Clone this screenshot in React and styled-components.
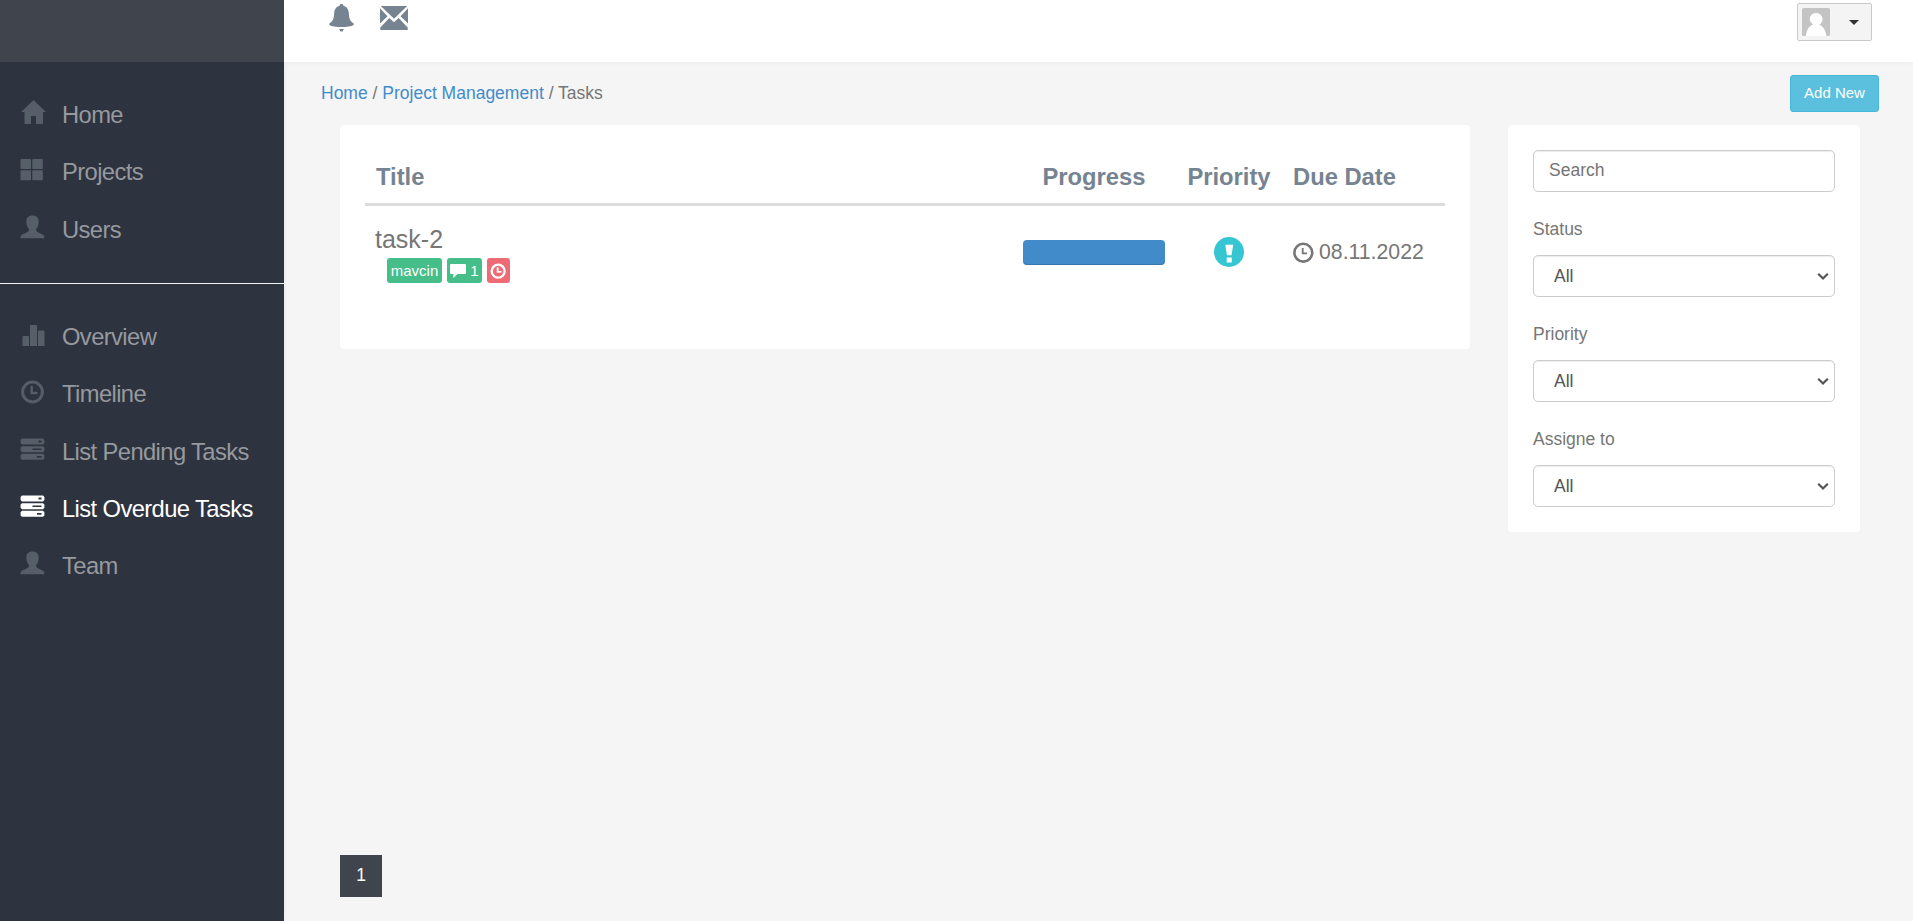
import React from 'react';
import styled, { createGlobalStyle } from 'styled-components';

const GlobalStyle = createGlobalStyle`
  * { box-sizing: border-box; }
  body {
    margin: 0;
    background: #f5f5f5;
    color: #767676;
    font-family: "Liberation Sans", Arial, sans-serif;
    font-size: 17.5px;
    line-height: 25px;
  }
`;

const Page = styled.div`
  display: flex;
  height: 921px;
  overflow: hidden;
`;

const Sidebar = styled.aside`
  flex: 0 0 284px;
  display: flex;
  flex-direction: column;
  background: #2d333f;
  box-shadow: 0 0 5px rgba(0, 0, 0, 0.06);
`;

const Brand = styled.div`
  height: 62px;
  background: #40444c;
`;

const NavGroup = styled.nav`
  padding: 24px 0 25.25px;
  & + & { border-top: 1px solid #f4f4f4; }
`;

const NavItem = styled.a`
  display: flex;
  align-items: center;
  gap: 16px;
  height: 57.25px;
  padding-left: 20px;
  font-size: 23.75px;
  letter-spacing: -0.6px;
  white-space: nowrap;
  color: ${(p) => (p.$active ? '#fff' : '#96999e')};
  svg {
    flex: none;
    margin-bottom: 5px;
    color: ${(p) => (p.$active ? '#fff' : '#565e67')};
  }
`;

const Main = styled.main`
  flex: 1;
  display: flex;
  flex-direction: column;
  min-width: 0;
`;

const TopBar = styled.header`
  display: flex;
  justify-content: space-between;
  align-items: flex-start;
  height: 62px;
  padding: 3px 41px 0 44px;
  background: #fff;
  box-shadow: 0 1px 5px rgba(0, 0, 0, 0.04);
`;

const TopIcons = styled.div`
  display: flex;
  gap: 24px;
  color: #768391;
`;

const UserButton = styled.button`
  display: flex;
  align-items: center;
  justify-content: space-between;
  width: 75px;
  height: 38px;
  padding: 0 12px 0 4px;
  border: 1px solid #c9c9c9;
  border-radius: 2px;
  background: #f4f4f4;
  color: #333;
`;

const PageHead = styled.div`
  display: flex;
  justify-content: space-between;
  align-items: flex-start;
  padding: 13px 34px 0 37px;
  height: 63px;
`;

const Breadcrumb = styled.div`
  padding-top: 6px;
  white-space: nowrap;
`;

const Link = styled.a`
  color: #428bca;
`;

const AddButton = styled.button`
  width: 89px;
  height: 37px;
  padding: 0 0 3px;
  border: 1px solid #46b8da;
  border-radius: 3px;
  background: #5bc0de;
  color: #fff;
  font: 15px "Liberation Sans", Arial, sans-serif;
`;

const Content = styled.div`
  display: flex;
  align-items: flex-start;
  gap: 38px;
  padding: 0 53px 0 56px;
`;

const Panel = styled.section`
  background: #fff;
  border-radius: 4px;
  padding: 25px;
`;

const TaskPanel = styled(Panel)`
  flex: 1;
  height: 224px;
`;

const FilterPanel = styled(Panel)`
  flex: 0 0 352px;
  height: 407px;
`;

const Row = styled.div`
  display: grid;
  grid-template-columns: 1fr 162px 108px 162px;
`;

const HeadRow = styled(Row)`
  height: 56px;
  padding-top: 14px;
  border-bottom: 3px solid #dcdcdc;
  color: #768391;
  font-size: 23.75px;
  font-weight: bold;
`;

const TaskRow = styled(Row)`
  height: 92px;
`;

const Cell = styled.div`
  padding: 0 10px;
  text-align: ${(p) => (p.$center ? 'center' : 'left')};
  white-space: nowrap;
`;

const TitleHead = styled(Cell)`
  padding-left: 11px;
`;

const MiddleCell = styled(Cell)`
  display: flex;
  align-items: center;
  justify-content: ${(p) => (p.$center ? 'center' : 'flex-start')};
  gap: 5px;
`;

const TaskTitle = styled.div`
  padding-top: 19px;
  font-size: 25px;
  line-height: 28px;
`;

const Tags = styled.div`
  display: flex;
  gap: 5px;
  margin: 5px 0 0 12px;
`;

const Tag = styled.span`
  display: flex;
  align-items: center;
  justify-content: center;
  gap: 4px;
  width: ${(p) => p.$width}px;
  height: 25px;
  border-radius: 3px;
  background: ${(p) => (p.$late ? '#ee6b75' : '#46be8a')};
  color: #fff;
  font-size: 15px;
  line-height: 25px;
`;

const Bar = styled.div`
  width: 142px;
  height: 25px;
  border-radius: 4px;
  background: #428bca;
  box-shadow: inset 0 -1px 0 rgba(0, 0, 0, 0.15);
`;

const DueDate = styled.span`
  font-size: 21.25px;
`;

const Control = styled.input`
  display: block;
  width: 302px;
  height: 42px;
  padding: 0 15px 1px;
  border: 1px solid #ccc;
  border-radius: 5px;
  background: #fff;
  box-shadow: inset 0 1px 1px rgba(0, 0, 0, 0.075);
  font: 17.5px "Liberation Sans", Arial, sans-serif;
  color: #555;
  appearance: none;
  &::placeholder { color: #757575; opacity: 1; }
`;

const SelectControl = styled(Control)`
  padding: 0 20px 1px;
`;

const Label = styled.label`
  display: block;
  margin: 25px 0 13px;
`;

const SelectBox = styled.div`
  position: relative;
  svg {
    position: absolute;
    right: 6px;
    top: 17px;
    pointer-events: none;
  }
`;

const PageNumber = styled.a`
  width: 42px;
  height: 42px;
  margin: auto 0 24px 56px;
  background: #40444c;
  color: #fff;
  text-align: center;
  line-height: 40px;
`;

const Icon = ({ size = 26, children }) => (
  <svg width={size} height={size} viewBox="0 0 26 26" fill="currentColor">{children}</svg>
);

const HomeIcon = () => (
  <Icon>
    <path d="M13.5 1 L26 13 H23 V25 H16 V17 H11 V25 H4.500 V13 H1 Z" />
  </Icon>
);

const GridIcon = () => (
  <Icon>
    <rect x="0.500" y="3" width="10.500" height="10" rx="0.800" />
    <rect x="12.300" y="3" width="10.500" height="10" rx="0.800" />
    <rect x="0.500" y="14.200" width="10.500" height="10" rx="0.800" />
    <rect x="12.300" y="14.200" width="10.500" height="10" rx="0.800" />
  </Icon>
);

const UserIcon = () => (
  <Icon>
    <path d="M12.5 1.500 C16.500 1.500 18.700 3.700 18.700 7.500 C18.700 11 17.800 13 16.200 14.800 C15.800 16.800 16.500 17.500 18 18.200 L23 20.800 C24 21.400 24.400 22.300 24.400 24.300 H0.500 C0.500 22.300 1 21.400 2 20.800 L7 18.200 C8.500 17.500 9.200 16.800 8.800 14.800 C7.200 13 6.300 11 6.300 7.500 C6.300 3.700 8.500 1.500 12.500 1.500 Z" />
  </Icon>
);

const StatsIcon = () => (
  <Icon>
    <path d="M2.500 25 V16 Q2.500 15 3.500 15 H8 Q9 15 9 16 V25 Z M10 25 V5 Q10 4 11 4 H16 Q17 4 17 5 V25 Z M18 25 V10.500 Q18 9.500 19 9.500 H23.500 Q24.500 9.500 24.500 10.500 V25 Z" />
  </Icon>
);

const ClockIcon = ({ size, heavy }) => (
  <Icon size={size}>
    <circle cx="12.500" cy="14" r="9.900" fill="none" stroke="currentColor" strokeWidth={heavy ? 3.6 : 3} />
    <path d="M11.700 9 V15 H16.500" fill="none" stroke="currentColor" strokeWidth={heavy ? 2.8 : 2.4} strokeLinecap="round" />
  </Icon>
);

const DateClockIcon = () => (
  <svg width="21" height="21" viewBox="0 0 21 21" fill="none" stroke="currentColor">
    <circle cx="10.300" cy="10.700" r="8.900" strokeWidth="2.600" />
    <path d="M9.700 6 V11.300 H14" strokeWidth="1.800" />
  </svg>
);

const ListIcon = () => (
  <Icon>
    <path fillRule="evenodd" d="M2 2.500 H23 L24.400 3.900 V7.100 L23 8.500 H2 L0.600 7.100 V3.900 Z M18.500 4.500 V6.500 H21.500 V4.500 Z" />
    <path fillRule="evenodd" d="M2 10.200 H23 L24.400 11.600 V14.800 L23 16.200 H2 L0.600 14.800 V11.600 Z M12.500 12.400 V14.100 H21.500 V12.400 Z" />
    <path fillRule="evenodd" d="M2 17.800 H23 L24.400 19.200 V22.400 L23 23.800 H2 L0.600 22.400 V19.200 Z M17 20 V21.700 H21.500 V20 Z" />
  </Icon>
);

const BellIcon = () => (
  <svg width="28" height="30" viewBox="0 0 28 30" fill="currentColor">
    <path d="M13.500 1 C14.800 1 15.400 1.600 15.400 2.700 C19 3.600 20.500 6.500 20.800 10 C21.100 15.500 21.800 18 25.500 20.300 Q26 21 25.500 22 C21.500 24.700 5.500 24.700 1.500 22 Q1 21 1.500 20.300 C5.200 18 5.900 15.500 6.200 10 C6.500 6.500 8 3.600 11.600 2.700 C11.600 1.600 12.200 1 13.500 1 Z" />
    <path d="M11 26 H16 L14.500 28.600 H12.500 Z" />
  </svg>
);

const MailIcon = () => (
  <svg width="28" height="30" viewBox="0 0 28 30" fill="currentColor">
    <path d="M0.800 3 H27.200 L14 15.800 Z M0 5.300 L7.500 13.200 L0 20.500 Z M28 5.300 L20.500 13.200 L28 20.500 Z M9.300 15 L14 19.300 L18.700 15 L27.700 24.500 V27 H0.300 V24.500 Z" />
  </svg>
);

const Avatar = () => (
  <svg width="28" height="28" viewBox="0 0 28 28">
    <rect width="28" height="28" rx="1.500" fill="#c4c4c4" />
    <path d="M4 28 C4.500 22 7 18 11 16.500 C8.800 14.800 7.800 13 7.800 11 C7.800 7.500 10.600 5 14 5 C17.400 5 20.500 7.500 20.500 11 C20.500 13.500 19.300 15.500 17.300 16.700 C21 18 23.800 22 24.500 28 Z" fill="#fff" />
  </svg>
);

const Caret = () => (
  <svg width="10" height="5" viewBox="0 0 10 5" fill="currentColor">
    <path d="M0 0 H10 L5 5 Z" />
  </svg>
);

const Chevron = () => (
  <svg width="12" height="9" viewBox="0 0 12 9" fill="none" stroke="#555" strokeWidth="2.200">
    <path d="M1.200 1.700 L6 6.500 L10.800 1.700" />
  </svg>
);

const CommentIcon = () => (
  <svg width="16" height="15" viewBox="0 0 16 15" fill="currentColor">
    <path d="M1 1 H15 Q16 1 16 2 V10 Q16 11 15 11 H7.500 L3.300 15 V11 H1 Q0 11 0 10 V2 Q0 1 1 1 Z" />
  </svg>
);

const PriorityIcon = () => (
  <svg width="30" height="30" viewBox="0 0 30 30">
    <circle cx="15" cy="15" r="15" fill="#36c6d3" />
    <path d="M11.300 7.800 H19.200 L17.500 18.200 H13 Z M12.700 20.500 H17.800 V25.500 H12.700 Z" fill="#fff" />
  </svg>
);

const mainLinks = [
  ['Home', HomeIcon],
  ['Projects', GridIcon],
  ['Users', UserIcon],
];

const projectLinks = [
  ['Overview', StatsIcon],
  ['Timeline', ClockIcon],
  ['List Pending Tasks', ListIcon],
  ['List Overdue Tasks', ListIcon],
  ['Team', UserIcon],
];

const Nav = ({ links, active }) => (
  <NavGroup>
    {links.map(([text, Glyph]) => (
      <NavItem key={text} $active={text === active}>
        <Glyph />
        <span>{text}</span>
      </NavItem>
    ))}
  </NavGroup>
);

const Filter = ({ label }) => (
  <>
    <Label>{label}</Label>
    <SelectBox>
      <SelectControl as="select">
        <option>All</option>
      </SelectControl>
      <Chevron />
    </SelectBox>
  </>
);

export default function App() {
  return (
    <Page>
      <GlobalStyle />
      <Sidebar>
        <Brand />
        <Nav links={mainLinks} />
        <Nav links={projectLinks} active="List Overdue Tasks" />
      </Sidebar>
      <Main>
        <TopBar>
          <TopIcons>
            <BellIcon />
            <MailIcon />
          </TopIcons>
          <UserButton>
            <Avatar />
            <Caret />
          </UserButton>
        </TopBar>
        <PageHead>
          <Breadcrumb>
            <Link>Home</Link> / <Link>Project Management</Link> / Tasks
          </Breadcrumb>
          <AddButton>Add New</AddButton>
        </PageHead>
        <Content>
          <TaskPanel>
            <HeadRow>
              <TitleHead>Title</TitleHead>
              <Cell $center>Progress</Cell>
              <Cell $center>Priority</Cell>
              <Cell>Due Date</Cell>
            </HeadRow>
            <TaskRow>
              <Cell>
                <TaskTitle>task-2</TaskTitle>
                <Tags>
                  <Tag $width={55}>mavcin</Tag>
                  <Tag $width={35}><CommentIcon />1</Tag>
                  <Tag $width={23} $late><ClockIcon size={17} heavy /></Tag>
                </Tags>
              </Cell>
              <MiddleCell $center><Bar /></MiddleCell>
              <MiddleCell $center><PriorityIcon /></MiddleCell>
              <MiddleCell><DateClockIcon /><DueDate>08.11.2022</DueDate></MiddleCell>
            </TaskRow>
          </TaskPanel>
          <FilterPanel>
            <Control placeholder="Search" />
            <Filter label="Status" />
            <Filter label="Priority" />
            <Filter label="Assigne to" />
          </FilterPanel>
        </Content>
        <PageNumber>1</PageNumber>
      </Main>
    </Page>
  );
}
